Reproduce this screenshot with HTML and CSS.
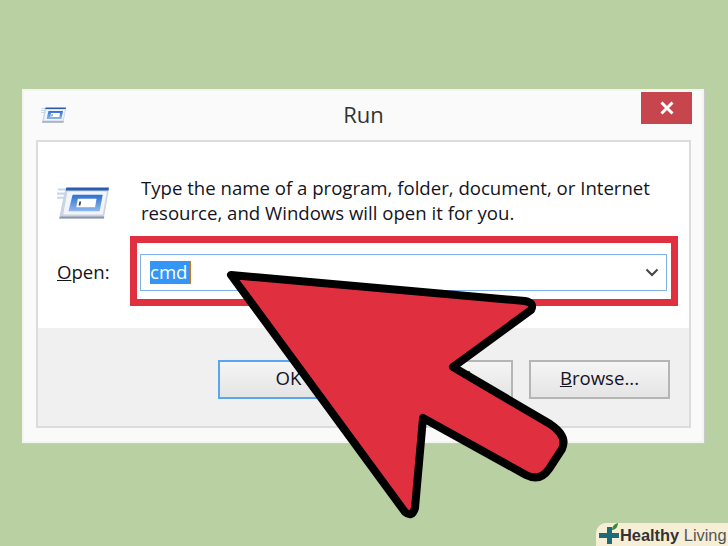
FILE: index.html
```html
<!DOCTYPE html>
<html lang="en">
  <head>
    <meta charset="UTF-8" />
    <meta name="viewport" content="width=device-width, initial-scale=1.0" />
    <title>Run</title>
    <link rel="stylesheet" href="styles.css">
  </head>
  <body>
    <svg class="defs" width="0" height="0">
      <defs>
        <linearGradient id="runBlue" x1="0" y1="0" x2="0" y2="1">
          <stop offset="0" stop-color="#2f6fd0" />
          <stop offset="1" stop-color="#8fb8ee" />
        </linearGradient>
        <symbol id="runIcon" viewBox="0 0 50 30">
          <path d="M1 2h13M0 6h9M0 10h7" stroke="#c5d6ee" stroke-width="2" fill="none" />
          <path d="M8 1H50L45 30H2Z" fill="#c9d3e2" />
          <path d="M9 0H50L49.4 3H8.5Z" fill="#2a5db0" />
          <path d="M10 4H48L44 26H6Z" fill="#f2f6fc" />
          <path d="M15 7H44L41 23H11Z" fill="url(#runBlue)" />
          <path d="M20 11H38L36.6 19H18.6Z" fill="#fff" />
          <path d="M21.6 13.5h1.6l-.8 4h-1.6Z" fill="#333" />
          <path d="M2 30H45L45.4 28H3Z" fill="#8d96a3" />
        </symbol>
      </defs>
    </svg>

    <div class="window">
      <div class="titlebar">
        <svg class="icon-small"><use href="#runIcon" /></svg>
        <span class="title">Run</span>
        <div class="close">
          <svg width="16" height="14" viewBox="0 0 16 14">
            <path d="M2.5 1.5L13.5 12.5M13.5 1.5L2.5 12.5" stroke="#fff" stroke-width="3" />
          </svg>
        </div>
      </div>

      <div class="panel">
        <div class="panel-main">
          <div class="intro">
            <svg class="icon-large"><use href="#runIcon" /></svg>
            <p class="message">Type the name of a program, folder, document, or Internet<br />resource, and Windows will open it for you.</p>
          </div>
          <div class="open-row">
            <label class="open-label"><u>O</u>pen:</label>
            <div class="highlight">
              <div class="combo">
                <span class="selected">cmd</span>
                <svg class="chevron" width="14" height="9" viewBox="0 0 14 9">
                  <path d="M1.5 1.5L7 7L12.5 1.5" stroke="#444" stroke-width="2" fill="none" />
                </svg>
              </div>
            </div>
          </div>
        </div>
        <div class="panel-foot">
          <button class="btn btn-default">OK</button>
          <button class="btn">Cancel</button>
          <button class="btn"><u>B</u>rowse...</button>
        </div>
      </div>
    </div>

    <!-- big pointer over the dialog -->
    <svg class="pointer" width="728" height="546" viewBox="0 0 728 546">
      <path d="M231 275L525 301Q535 303 531 310L453 367L550 424Q568 436 562 449L549 469Q540 482 526 475L423 418L415 508Q412 518 405 512Z"
        fill="#e03040" stroke="#000" stroke-width="8" stroke-linejoin="round" />
    </svg>

    <div class="badge">
      <svg class="badge-logo" width="22" height="23" viewBox="0 0 22 23">
        <path d="M9 4h5v6h7v5h-7v6H9v-6H1v-5h8Z" fill="#1f6a78" />
        <path d="M14 7C14 4 16 1 20 0C20 3 18 7 14 7Z" fill="#3f8a3a" />
      </svg>
      <span class="brand"><b>Healthy</b> Living</span>
    </div>
  </body>
</html>
```

FILE: styles.css
```css
html,
body {
  height: 100%;
}
body {
  margin: 0;
  background-color: #b9d0a2;
  font-family: "Open Sans", "Noto Sans", sans-serif;
  color: #14141e;
  overflow: hidden;
}
.defs {
  display: block;
}
.window {
  box-sizing: border-box;
  width: 682px;
  height: 354px;
  margin: 89px 0 0 22px;
  display: flex;
  flex-direction: column;
  background-color: #fafafa;
  border: 2px solid #f4f4f0;
  box-shadow: 1px 1px 0 #c9c9cc;
}
.titlebar {
  height: 48px;
  flex: none;
  display: grid;
  grid-template-columns: 1fr auto 1fr;
  align-items: start;
  padding: 1px 10px 0 17px;
}
.icon-small {
  width: 25px;
  height: 16px;
  margin-top: 15px;
}
.title {
  font-size: 22px;
  line-height: 30px;
  margin-top: 7px;
  margin-left: -6px;
  color: #333;
}
.close {
  justify-self: end;
  width: 51px;
  height: 32px;
  display: flex;
  align-items: center;
  justify-content: center;
  background-color: #c7464e;
}
.panel {
  flex: 1;
  display: flex;
  flex-direction: column;
  margin: 0 11px 13px 12px;
  border: 2px solid #dcdcdc;
}
.panel-main {
  height: 186px;
  flex: none;
  background-color: #fff;
}
.intro {
  display: flex;
  padding-top: 33px;
  padding-left: 19px;
}
.icon-large {
  width: 52px;
  height: 32px;
  margin-top: 12px;
  flex: none;
}
.message {
  margin: 0 0 0 32px;
  font-size: 18.6px;
  line-height: 25px;
  white-space: nowrap;
}
.open-row {
  display: flex;
  align-items: center;
  margin-top: 11px;
  padding-left: 19px;
}
.open-label {
  font-size: 18.6px;
  width: 73px;
  flex: none;
}
.highlight {
  box-sizing: border-box;
  width: 548px;
  height: 70px;
  padding: 11px 4px 8px 3px;
  border: 7px solid #e03040;
}
.combo {
  box-sizing: border-box;
  height: 37px;
  display: flex;
  align-items: center;
  justify-content: space-between;
  padding: 0 7px 0 9px;
  border: 1px solid #7fb2e6;
}
.selected {
  display: block;
  width: 40px;
  height: 23px;
  line-height: 22px;
  font-size: 18.6px;
  color: #fff;
  background-color: #3395f5;
  border-right: 1px solid #c87a20;
}
.panel-foot {
  flex: 1;
  display: flex;
  justify-content: flex-end;
  gap: 16px;
  padding: 32px 19px 0 0;
  background-color: #f0f0f0;
}
.btn {
  box-sizing: border-box;
  width: 141px;
  height: 39px;
  padding: 0 0 5px;
  font-family: inherit;
  font-size: 18.6px;
  color: #14141e;
  border: 2px solid #b5b5b5;
  background: linear-gradient(#f5f5f5, #e4e4e4);
}
.btn-default {
  border-color: #5aa5f0;
  margin-right: -3px;
}
.pointer {
  position: absolute;
  left: 0;
  top: 0;
}
.badge {
  position: absolute;
  right: 0;
  bottom: 0;
  box-sizing: border-box;
  width: 132px;
  height: 23px;
  padding-left: 2px;
  display: flex;
  align-items: flex-end;
  background-color: #f6efd6;
  border-top-left-radius: 10px;
}
.badge-logo {
  flex: none;
}
.brand {
  font-family: "Liberation Sans", Arial, sans-serif;
  font-size: 16.4px;
  line-height: 22px;
  white-space: nowrap;
  color: #555;
}
.brand b {
  color: #333;
}
```
